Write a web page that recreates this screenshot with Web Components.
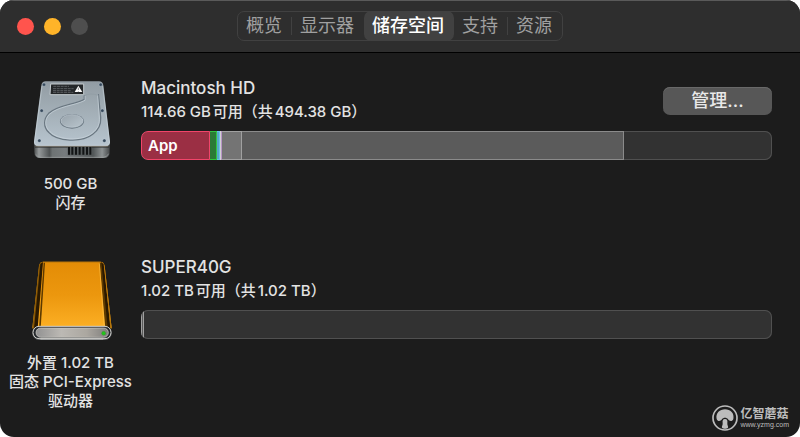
<!DOCTYPE html>
<html lang="zh-CN">
<head>
<meta charset="utf-8">
<title>储存空间</title>
<style>
    body {
        margin: 0;
        background: #fff;
        color: #e3e3e3;
        font-family: Inter, "Noto Sans CJK SC", sans-serif;
        text-autospace: normal;
    }
</style>
</head>
<body>
<about-window>
    <tab-bar slot="tabs" items="概览,显示器,储存空间,支持,资源" selected="2"></tab-bar>

    <storage-volume name="Macintosh HD" usage="114.66 GB可用（共494.38 GB）">
        <internal-disk slot="icon"></internal-disk>
        <span slot="kind">500 GB<br>闪存</span>
        <push-button slot="action">管理...</push-button>
        <usage-bar slot="bar">
            <usage-part style="--share: 10.9%; --fill: #9b2f44; --edge: #f2456a">App</usage-part>
            <usage-part style="--share: 1.2%; --fill: #2b7a35; --edge: #32c43f"></usage-part>
            <usage-part style="--share: .35%; --fill: #55a8c8; --edge: #65c5e2"></usage-part>
            <usage-part style="--share: .2%; --fill: #d2d2d2; --edge: #d2d2d2"></usage-part>
            <usage-part style="--share: .2%; --fill: #a583b5; --edge: #b795c6"></usage-part>
            <usage-part style="--share: 3.1%; --fill: #747474; --edge: #a0a0a0"></usage-part>
            <usage-part style="--share: 60.6%; --fill: #5b5b5b; --edge: #8b8b8b"></usage-part>
        </usage-bar>
    </storage-volume>

    <storage-volume name="SUPER40G" usage="1.02 TB可用（共1.02 TB）">
        <external-disk slot="icon"></external-disk>
        <span slot="kind">外置 1.02 TB<br>固态 PCI-Express<br>驱动器</span>
        <usage-bar slot="bar">
            <usage-part style="--share: .4%; --fill: #5b5b5b; --edge: #a0a0a0"></usage-part>
        </usage-bar>
    </storage-volume>

    <site-mark slot="mark"></site-mark>
</about-window>

<script>
class AboutWindow extends HTMLElement {

    constructor() {
        super();
        this.attachShadow({ mode: "open" });
        this.shadowRoot.innerHTML = `
            <style>
                :host {
                    display: flex;
                    flex-direction: column;
                    position: relative;
                    box-sizing: border-box;
                    min-height: 100vh;
                    border-radius: 14px;
                    overflow: hidden;
                    background: #1c1c1c;
                }

                header {
                    display: grid;
                    grid-template-columns: 1fr auto 1fr;
                    align-items: center;
                    box-sizing: border-box;
                    height: 53px;
                    padding-bottom: 1px;
                    border-top: 1px solid #5a5a5a;
                    border-bottom: 1px solid #000;
                    background: #2e2e2e;
                }

                main {
                    padding: 17px 28px 0 0;
                }
            </style>
            <header>
                <window-lights></window-lights>
                <slot name="tabs"></slot>
            </header>
            <main><slot></slot></main>
            <slot name="mark"></slot>
        `;
    }
}

class WindowLights extends HTMLElement {

    constructor() {
        super();
        this.attachShadow({ mode: "open" });
        this.shadowRoot.innerHTML = `
            <style>
                :host {
                    display: flex;
                    gap: 10px;
                    padding-left: 17px;
                }

                button {
                    width: 17px;
                    height: 17px;
                    padding: 0;
                    border: 0;
                    border-radius: 50%;
                }

                .close { background: #ff544d; }
                .minimize { background: #ffb429; }
                .zoom { background: #4e4e4e; }
            </style>
            <button class="close" aria-label="关闭"></button>
            <button class="minimize" aria-label="最小化"></button>
            <button class="zoom" aria-label="缩放" disabled></button>
        `;
    }
}

class TabBar extends HTMLElement {

    constructor() {
        super();
        this.attachShadow({ mode: "open" });
        this.selected = Number(this.getAttribute("selected"));
        this.render();
    }

    render() {
        const items = this.getAttribute("items").split(",");
        this.shadowRoot.innerHTML = `
            <style>
                :host {
                    display: flex;
                    box-sizing: border-box;
                    height: 30px;
                    border: 1px solid #414141;
                    border-radius: 7px;
                }

                button {
                    position: relative;
                    margin: -1px 0;
                    padding: 0 10px 1px 8px;
                    border: 0;
                    background: none;
                    color: #a0a0a0;
                    font: 18px/26px Inter, "Noto Sans CJK SC", sans-serif;
                }

                button.line::after {
                    content: "";
                    position: absolute;
                    top: 6px;
                    right: 0;
                    bottom: 6px;
                    width: 1px;
                    background: #414141;
                }

                button[aria-pressed="true"] {
                    border-radius: 7px;
                    background: #414141;
                    color: #fff;
                    font-weight: 500;
                }
            </style>
            ${items.map((text, i) => `
                <button class="${this.hasLine(i, items.length) ? "line" : ""}"
                    aria-pressed="${i === this.selected}">${text}</button>
            `).join("")}
        `;
        this.shadowRoot.querySelectorAll("button").forEach((button, i) => {
            button.addEventListener("click", () => {
                this.selected = i;
                this.render();
            });
        });
    }

    // no divider next to the selected tab
    hasLine(i, count) {
        return i < count - 1 && i !== this.selected && i + 1 !== this.selected;
    }
}

class StorageVolume extends HTMLElement {

    constructor() {
        super();
        this.attachShadow({ mode: "open" });
        this.shadowRoot.innerHTML = `
            <style>
                :host {
                    display: grid;
                    grid-template-columns: 141px 1fr;
                    min-height: 179px;
                }

                .device {
                    display: flex;
                    flex-direction: column;
                    align-items: center;
                    gap: 4px;
                    text-align: center;
                    font-size: 15px;
                    font-weight: 500;
                    line-height: 19px;
                    white-space: nowrap;
                }

                .info {
                    padding-top: 6px;
                }

                .heading {
                    display: flex;
                    align-items: center;
                    justify-content: space-between;
                    margin-bottom: 7px;
                }

                h2, p {
                    margin: 0;
                    font-weight: 500;
                    line-height: 24px;
                }

                h2 { font-size: 17px; }
                p { font-size: 15px; }
            </style>
            <div class="device">
                <slot name="icon"></slot>
                <slot name="kind"></slot>
            </div>
            <div class="info">
                <div class="heading">
                    <div>
                        <h2>${this.getAttribute("name")}</h2>
                        <p>${this.getAttribute("usage")}</p>
                    </div>
                    <slot name="action"></slot>
                </div>
                <slot name="bar"></slot>
            </div>
        `;
    }
}

class PushButton extends HTMLElement {

    constructor() {
        super();
        this.attachShadow({ mode: "open" });
        this.shadowRoot.innerHTML = `
            <style>
                :host {
                    display: block;
                    padding-top: 2px;
                    text-autospace: no-autospace;
                }

                button {
                    display: block;
                    width: 109px;
                    height: 28px;
                    padding: 0;
                    border: 0;
                    border-radius: 7px;
                    background: #575757;
                    box-shadow: inset 0 1px 0 #696969;
                    color: #e8e8e8;
                    font: 500 18px/26px Inter, "Noto Sans CJK SC", sans-serif;
                }
            </style>
            <button><slot></slot></button>
        `;
    }
}

class UsageBar extends HTMLElement {

    constructor() {
        super();
        this.attachShadow({ mode: "open" });
        this.shadowRoot.innerHTML = `
            <style>
                :host {
                    display: flex;
                    position: relative;
                    height: 29px;
                    border-radius: 7px;
                    overflow: hidden;
                    background: #323232;
                    box-shadow: inset 0 0 0 1px #505050;
                }

                ::slotted(:first-child) {
                    border-left: 1px solid var(--edge);
                    border-radius: 7px 0 0 7px;
                }
            </style>
            <slot></slot>
        `;
    }
}

class UsagePart extends HTMLElement {

    constructor() {
        super();
        this.attachShadow({ mode: "open" });
        this.shadowRoot.innerHTML = `
            <style>
                :host {
                    flex: 0 0 var(--share);
                    box-sizing: border-box;
                    border: 1px solid var(--edge);
                    border-left-width: 0;
                    background: var(--fill);
                    color: #fff;
                    font-size: 15px;
                    font-weight: 600;
                    line-height: 27px;
                    text-indent: 6px;
                }
            </style>
            <slot></slot>
        `;
    }
}

class InternalDisk extends HTMLElement {

    constructor() {
        super();
        this.attachShadow({ mode: "open" });
        this.shadowRoot.innerHTML = `
            <style>
                :host, svg {
                    display: block;
                    width: 100px;
                    height: 100px;
                }
            </style>
            <svg viewBox="0 0 300 300" aria-hidden="true">
                <defs>
                    <linearGradient id="plate" x1="0" y1="0" x2="0" y2="1">
                        <stop offset="0" stop-color="#929ca3"/>
                        <stop offset=".5" stop-color="#a4b0b8"/>
                        <stop offset="1" stop-color="#b8c5cf"/>
                    </linearGradient>
                    <linearGradient id="base" x1="0" y1="0" x2="1" y2="0">
                        <stop offset="0" stop-color="#4d5051"/>
                        <stop offset=".06" stop-color="#969a9b"/>
                        <stop offset=".2" stop-color="#4f5354"/>
                        <stop offset=".24" stop-color="#6e7374"/>
                        <stop offset=".4" stop-color="#777c7e"/>
                        <stop offset=".78" stop-color="#515657"/>
                        <stop offset=".9" stop-color="#8c9192"/>
                        <stop offset="1" stop-color="#454849"/>
                    </linearGradient>
                    <linearGradient id="hub" x1="0" y1="0" x2="1" y2="1">
                        <stop offset="0" stop-color="#98a3ab"/>
                        <stop offset="1" stop-color="#b8c4cc"/>
                    </linearGradient>
                </defs>
                <path d="M40 215H266V246Q266 264 248 264H58Q40 264 40 246Z" fill="url(#base)"/>
                <path d="M42 225H264V233H42Z" fill="#27292a" opacity=".7"/>
                <path d="M44 253Q50 262 60 262H246Q258 262 263 251" fill="none" stroke="#a0a4a5" stroke-width="2"/>
                <path d="M140 229H212V256H140Z" fill="#555a5b"/>
                <path d="M144 230V254M154 230V254M165 230V254M176 230V254M187 230V254M198 230V254M208 230V254" stroke="#121415" stroke-width="6"/>
                <path d="M74 34H234Q245 34 247 46L267 214Q269 229 253 229H53Q37 229 39 214L61 46Q63 34 74 34Z" fill="url(#plate)"/>
                <path d="M63 48L41 214Q40 226 53 226H253Q266 226 265 214L245 48" fill="none" stroke="#d0dae1" stroke-width="2" opacity=".75"/>
                <path d="M43 229H262" stroke="#817766" stroke-width="2"/>
                <path d="M190 76V88C158 105 110 105 83 130C68 146 66 170 83 187C108 215 182 219 215 193C235 178 240 160 239 143L232 72" fill="none" stroke="#6a7781" stroke-width="4"/>
                <path d="M192 78V91C158 108 112 108 85 133C70 149 70 170 87 185C112 211 180 215 213 190C233 174 236 160 235 143L230 74" fill="none" stroke="#ccd7de" stroke-width="2"/>
                <path d="M188 78Q209 67 231 76" fill="none" stroke="#8f9ba3" stroke-width="2"/>
                <ellipse cx="153" cy="154" rx="36" ry="22" fill="#6a7781"/>
                <ellipse cx="153" cy="153" rx="33" ry="19" fill="url(#hub)" stroke="#c1ccd4" stroke-width="2"/>
                <path d="M89 42H188V74H87Z" fill="#242729" stroke="#c4cbcf" stroke-width="3"/>
                <path d="M97 49H144M96 56H158M96 62H150M96 67H157" stroke="#74797c" stroke-width="2" stroke-dasharray="9 2"/>
                <path d="M172 47L184 66H161Z" fill="#fff"/>
                <path d="M172 53V60M172 63V65" stroke="#555" stroke-width="2"/>
                <g fill="#35485b" stroke="#c6d2da" stroke-width="1">
                    <circle cx="69" cy="44" r="5"/>
                    <circle cx="239" cy="44" r="5"/>
                    <circle cx="62" cy="122" r="5"/>
                    <circle cx="244" cy="122" r="5"/>
                    <circle cx="55" cy="212" r="5"/>
                    <circle cx="250" cy="212" r="5"/>
                </g>
            </svg>
        `;
    }
}

class ExternalDisk extends HTMLElement {

    constructor() {
        super();
        this.attachShadow({ mode: "open" });
        this.shadowRoot.innerHTML = `
            <style>
                :host, svg {
                    display: block;
                    width: 100px;
                    height: 100px;
                }
            </style>
            <svg viewBox="0 -3 300 300" aria-hidden="true">
                <defs>
                    <linearGradient id="top" x1="0" y1="0" x2="0" y2="1">
                        <stop offset="0" stop-color="#e38c06"/>
                        <stop offset=".5" stop-color="#ec970e"/>
                        <stop offset="1" stop-color="#fcb025"/>
                    </linearGradient>
                    <linearGradient id="front" x1="0" y1="0" x2="1" y2="0">
                        <stop offset="0" stop-color="#929292"/>
                        <stop offset=".35" stop-color="#bcb9b4"/>
                        <stop offset=".7" stop-color="#aba7a0"/>
                        <stop offset="1" stop-color="#7f7e7c"/>
                    </linearGradient>
                </defs>
                <path d="M67 35H238Q249 35 251 48L272 235H34L54 48Q56 35 67 35Z" fill="url(#top)"/>
                <path d="M54 48Q56 37 64 36L46 235H34Z" fill="#8a5904"/>
                <path d="M58 42L66 36L50 235H39Z" fill="#2a1900"/>
                <path d="M68 38L72 38L59 235H54Z" fill="#5c3900"/>
                <path d="M236 38L243 37L262 235H253Z" fill="#5e3b00"/>
                <path d="M241 37L248 42L269 235H260Z" fill="#2a1900"/>
                <path d="M249 42L251 48L272 235H268Z" fill="#b57508"/>
                <path d="M235 40L250 234" stroke="#ffc24a" stroke-width="2"/>
                <path d="M66 36H239" stroke="#a36a0c" stroke-width="2"/>
                <rect x="34" y="228" width="238" height="42" rx="20" fill="#55595d"/>
                <rect x="36" y="229" width="234" height="37" rx="18" fill="#24282c" stroke="#d5d4cf" stroke-width="3"/>
                <rect x="45" y="234" width="217" height="28" rx="14" fill="url(#front)" stroke="#d7d5d0" stroke-width="2"/>
                <path d="M58 267H247" stroke="#cacac8" stroke-width="3"/>
                <circle cx="248" cy="250" r="6" fill="#21c51b" stroke="#418137" stroke-width="1"/>
            </svg>
        `;
    }
}

class SiteMark extends HTMLElement {

    constructor() {
        super();
        this.attachShadow({ mode: "open" });
        this.shadowRoot.innerHTML = `
            <style>
                :host {
                    display: flex;
                    align-items: center;
                    gap: 2px;
                    position: absolute;
                    right: 11px;
                    bottom: 6px;
                    color: #bcbcbc;
                }

                svg {
                    width: 26px;
                    height: 26px;
                }

                strong, small {
                    display: block;
                    white-space: nowrap;
                }

                strong {
                    font-size: 12px;
                    line-height: 14px;
                }

                small {
                    font: 7px/8px "Liberation Sans", sans-serif;
                }
            </style>
            <svg viewBox="0 0 78 78" fill="#bcbcbc" aria-hidden="true">
                <circle cx="39" cy="39" r="36" fill="none" stroke="#bcbcbc" stroke-width="5"/>
                <path d="M14 42C10 24 24 13 39 13C55 13 68 25 64 42C61 50 53 50 48 43C44 37 34 37 30 43C25 50 17 50 14 42Z"/>
                <path d="M39 42C46 42 47 48 46 54C45 61 50 64 48 68C44 72 34 72 30 68C28 64 33 61 32 54C31 48 32 42 39 42Z"/>
            </svg>
            <div>
                <strong>亿智蘑菇</strong>
                <small>www.yzmg.com</small>
            </div>
        `;
    }
}

customElements.define("window-lights", WindowLights);
customElements.define("about-window", AboutWindow);
customElements.define("tab-bar", TabBar);
customElements.define("storage-volume", StorageVolume);
customElements.define("push-button", PushButton);
customElements.define("usage-bar", UsageBar);
customElements.define("usage-part", UsagePart);
customElements.define("internal-disk", InternalDisk);
customElements.define("external-disk", ExternalDisk);
customElements.define("site-mark", SiteMark);
</script>
</body>
</html>
